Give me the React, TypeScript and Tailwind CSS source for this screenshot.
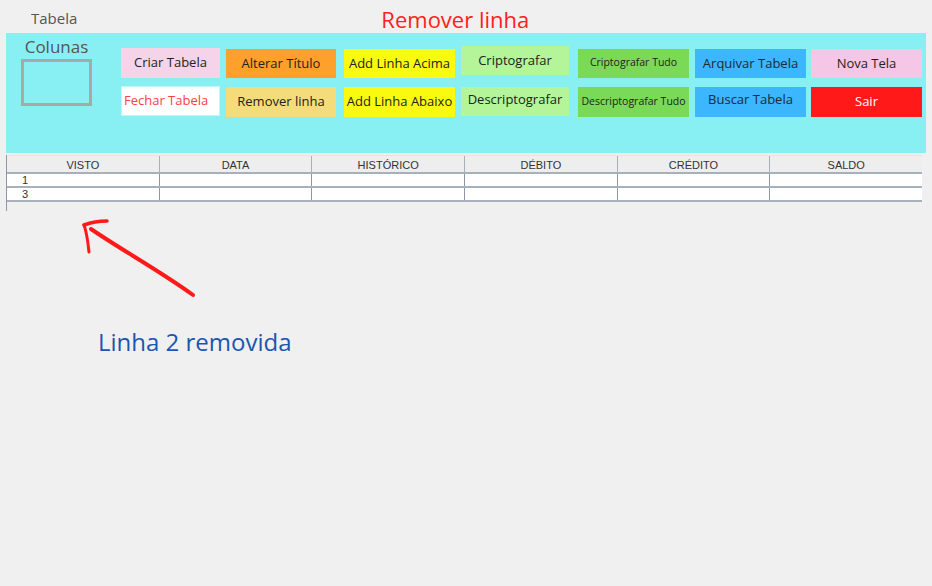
const cols = ['VISTO', 'DATA', 'HISTÓRICO', 'DÉBITO', 'CRÉDITO', 'SALDO'];
const rows = ['1', '3'];

function Btn({
  label,
  className,
}: {
  label: string;
  className: string;
}) {
  return (
    <div className={`flex items-center justify-center whitespace-nowrap ${className}`}>
      {label}
    </div>
  );
}

export default function App() {
  return (
    <main
      className="w-[932px] h-[586px] bg-[#f0f0f0] overflow-hidden text-[#222]"
      style={{ fontFamily: '"Open Sans", "Noto Sans", sans-serif' }}
    >
      {/* Title row */}
      <div className="flex h-[33px] items-start">
        <span className="ml-[31px] mt-[8px] text-[15px] leading-[20px] text-[#555]">Tabela</span>
        <span className="ml-[304px] mt-[5px] text-[22px] leading-[28px] text-[#ff2020]">
          Remover linha
        </span>
      </div>

      {/* Toolbar panel */}
      <div className="ml-[6px] w-[920px] h-[120px] bg-[#88f0f3] flex">
        <div className="w-[101px] flex flex-col items-center">
          <span className="mt-[3px] text-[17px] leading-[22px] text-[#555]">Colunas</span>
          <div className="mt-[1px] w-[71px] h-[47px] border-[3px] border-[#a8a8a8]" />
        </div>

        <div className="ml-[14px] flex flex-col">
          <div className="flex mt-[15px] h-[30px] items-start text-[13px]">
            <Btn label="Criar Tabela" className="w-[99px] h-[30px] bg-[#f5d3e9]" />
            <Btn label="Alterar Título" className="ml-[6px] w-[110px] h-[29px] mt-[1px] bg-[#fda12c]" />
            <Btn label="Add Linha Acima" className="ml-[8px] w-[111px] h-[29px] mt-[1px] bg-[#fafa10]" />
            <Btn label="Criptografar" className="ml-[6px] w-[108px] h-[29px] -mt-[2px] bg-[#b4f59a]" />
            <Btn label="Criptografar Tudo" className="ml-[9px] w-[111px] h-[29px] mt-[1px] bg-[#7ad956] text-[10.5px] pb-[2px]" />
            <Btn label="Arquivar Tabela" className="ml-[6px] w-[111px] h-[29px] mt-[1px] bg-[#3cb6fd] text-[#1a2a3a]" />
            <Btn label="Nova Tela" className="ml-[5px] w-[111px] h-[29px] mt-[1px] bg-[#f6c6e6]" />
          </div>
          <div className="flex mt-[8px] h-[30px] items-start text-[13px]">
            <Btn label="Fechar Tabela" className="w-[99px] h-[30px] bg-white border border-[#bff6f8] text-[#ff4040] justify-start pl-[2px]" />
            <Btn label="Remover linha" className="ml-[6px] w-[110px] h-[30px] mt-[1px] bg-[#f4dc7a]" />
            <Btn label="Add Linha Abaixo" className="ml-[8px] w-[111px] h-[30px] mt-[1px] bg-[#fafa10]" />
            <Btn label="Descriptografar" className="ml-[6px] w-[108px] h-[29px] mt-[1px] bg-[#b4f59a] pb-[3px]" />
            <Btn label="Descriptografar Tudo" className="ml-[9px] w-[111px] h-[30px] mt-[1px] bg-[#7ad956] text-[10.5px]" />
            <Btn label="Buscar Tabela" className="ml-[6px] w-[111px] h-[30px] mt-[1px] bg-[#3cb6fd] text-[#1a2a3a] pb-[4px]" />
            <Btn label="Sair" className="ml-[5px] w-[111px] h-[30px] mt-[1px] bg-[#ff1919] text-white" />
          </div>
        </div>
      </div>

      {/* Table */}
      <div
        className="ml-[6px] mt-[2px] w-[916px] h-[56px] border-l border-[#8c98a8]"
        style={{ fontFamily: '"Liberation Sans", Arial, sans-serif' }}
      >
        <div className="flex h-[19px] bg-[#eeeeee] border-t border-[#e4e4e4] border-b-2 border-b-[#a8b0bc] text-[11px] text-[#333]">
          {cols.map((c, i) => (
            <div
              key={c}
              className={`flex-1 flex items-center justify-center pt-[3px] ${i < cols.length - 1 ? 'border-r border-[#a8b0bc]' : ''}`}
            >
              {c}
            </div>
          ))}
        </div>
        {rows.map((r) => (
          <div key={r} className="flex h-[14px] bg-white border-b-2 border-[#a8b0bc] text-[11px] text-[#333]">
            {cols.map((c, i) => (
              <div
                key={c}
                className={`flex-1 flex items-center pl-[15px] leading-none ${i < cols.length - 1 ? 'border-r border-[#8c98a8]' : ''}`}
              >
                {i === 0 ? r : ''}
              </div>
            ))}
          </div>
        ))}
      </div>

      {/* Annotation */}
      <div className="relative h-[160px]">
        <svg className="absolute left-0 top-0" width="220" height="110" viewBox="0 0 220 110">
          <g transform="translate(0,-212)" fill="none" stroke="#ff1a1a" strokeLinecap="round" strokeLinejoin="round">
            <path d="M91 230 C 120 250, 160 272, 193 296" strokeWidth="4" />
            <path d="M84 226 C 92 223, 100 222, 107 222" strokeWidth="3.5" />
            <path d="M84 226 C 87 234, 88 244, 89 253" strokeWidth="3" />
          </g>
        </svg>
        <span className="absolute left-[98px] top-[116px] text-[24px] leading-[30px] text-[#1a56b0]">
          Linha 2 removida
        </span>
      </div>
    </main>
  );
}
